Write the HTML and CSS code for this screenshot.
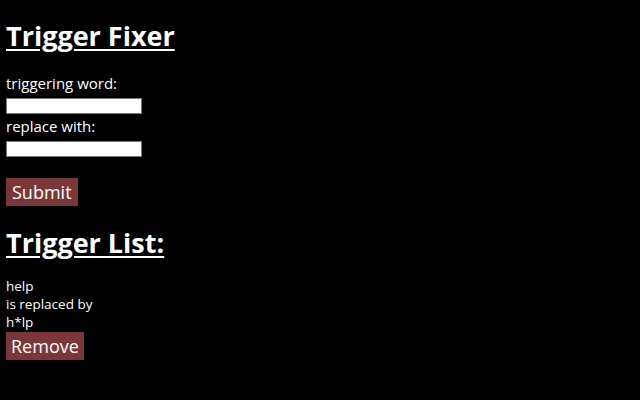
FILE: index.html
```html
<!DOCTYPE html>
<html>
<head>
<meta charset="utf-8">
<link rel="stylesheet" href="styles.css">
</head>
<body>
<h1 class="title">Trigger Fixer</h1>
<form class="form">
  <label class="label">triggering word:</label>
  <input class="field" type="text">
  <label class="label">replace with:</label>
  <input class="field" type="text">
  <button class="btn submit" type="button">Submit</button>
</form>
<h1 class="title list-title">Trigger List:</h1>
<div class="entry">
  <div class="line">help</div>
  <div class="line">is replaced by</div>
  <div class="line">h*lp</div>
  <button class="btn" type="button">Remove</button>
</div>
</body>
</html>
```
FILE: styles.css
```css
html, body {
  background: #000;
}
body {
  margin: 0;
  padding: 22px 6px 0 6px;
  color: #fff;
  font-family: "Open Sans", "DejaVu Sans", sans-serif;
}
.title {
  margin: 0;
  font-size: 27px;
  line-height: 28px;
  font-weight: 700;
  text-decoration: underline;
  text-underline-offset: 3px;
  text-decoration-thickness: 2px;
}
.form {
  display: flex;
  flex-direction: column;
  align-items: flex-start;
  margin-top: 21px;
}
.label {
  font-size: 15px;
  line-height: 24px;
}
.field {
  box-sizing: border-box;
  width: 136px;
  height: 16px;
  margin: 3px 0 0 0;
  padding: 0;
  border: 1px solid #777;
  background: #fff;
}
.btn {
  box-sizing: border-box;
  height: 28px;
  padding: 0 6px;
  border: none;
  background: #7b3737;
  color: #fff;
  font-family: "Open Sans", "DejaVu Sans", sans-serif;
  font-size: 18px;
  line-height: 28px;
}
.submit {
  margin-top: 21px;
}
.list-title {
  margin-top: 23px;
}
.entry {
  margin-top: 20px;
  display: flex;
  flex-direction: column;
  align-items: flex-start;
}
.line {
  font-size: 13.5px;
  line-height: 18px;
}
.entry .btn {
  margin-top: 1px;
  padding: 0 5px;
}
```
